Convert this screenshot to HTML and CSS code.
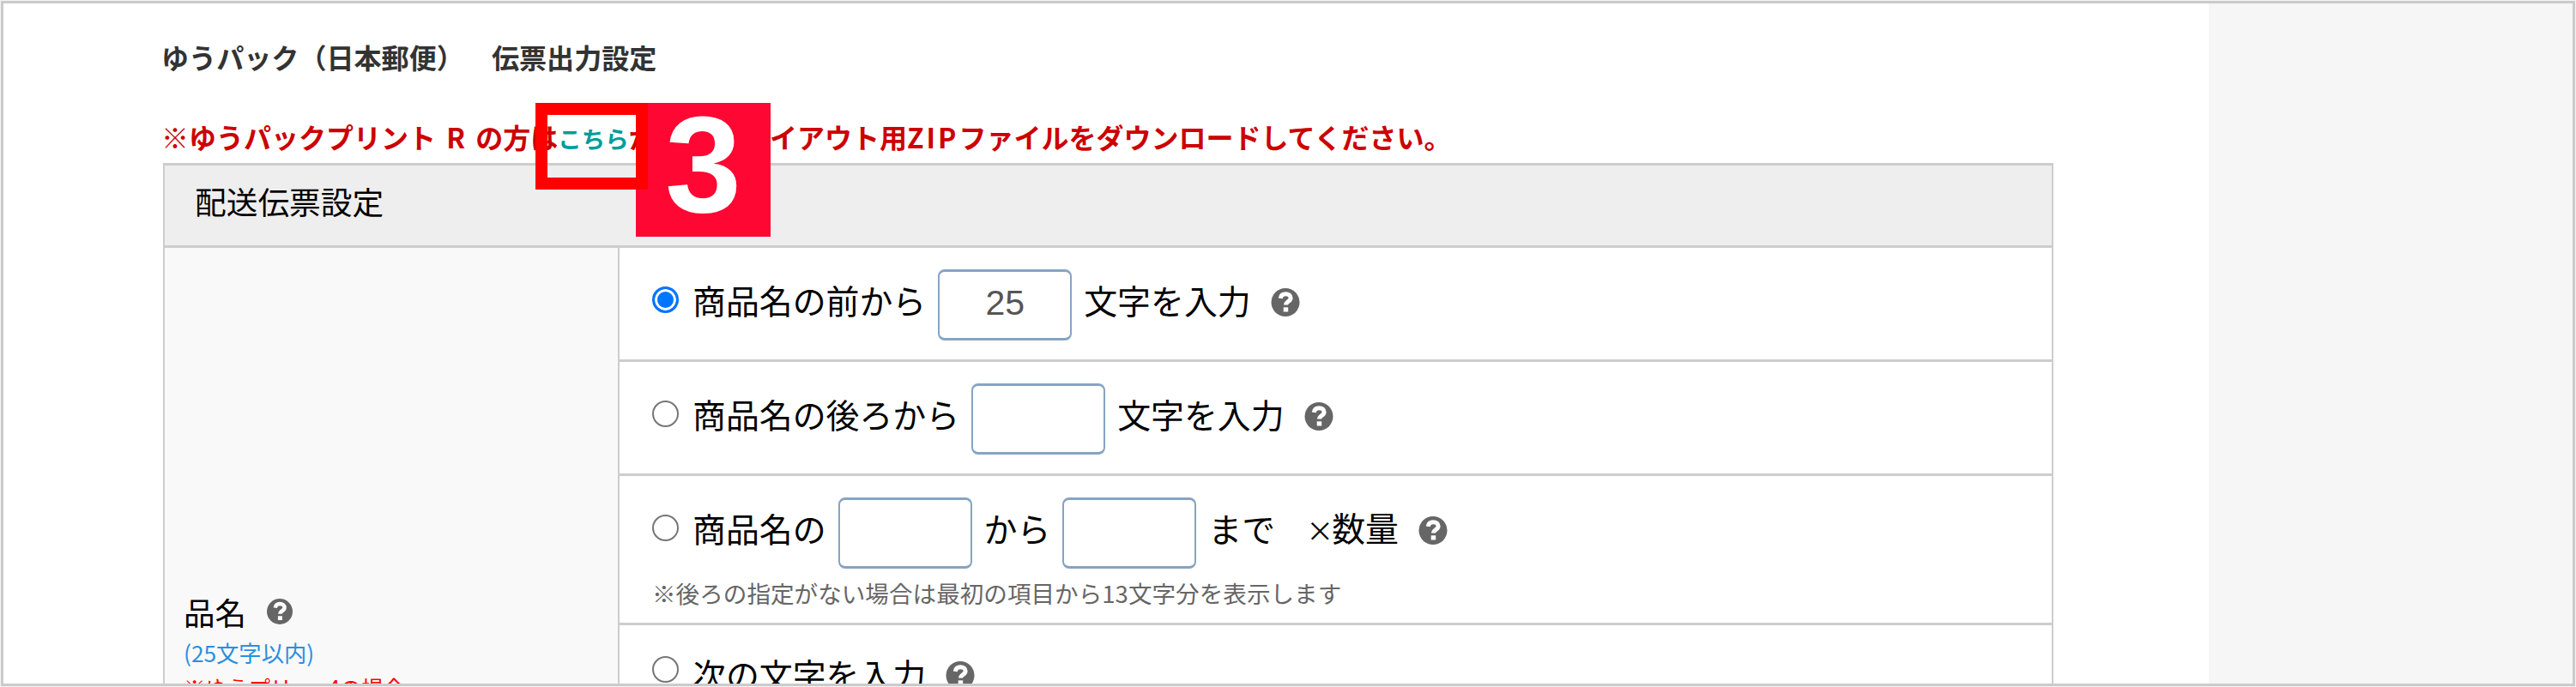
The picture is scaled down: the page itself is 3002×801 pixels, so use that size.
FILE: index.html
```html
<!DOCTYPE html>
<html lang="ja">
<head>
<meta charset="utf-8">
<title>伝票出力設定</title>
<link rel="stylesheet" href="styles.css">
</head>
<body>
<svg width="0" height="0" class="defs"><symbol id="help" viewBox="0 0 33 33"><circle cx="16.500" cy="16.500" r="16.500" fill="#666"/><path d="M10.700 11.800C11.300 8.200 13.500 6.700 16.700 6.700C20.200 6.700 22.600 8.500 22.600 11.500C22.600 15.600 17 15.400 17 19.600" fill="none" stroke="#fff" stroke-width="5"/><rect x="14.200" y="22.300" width="5.500" height="5.200" fill="#fff"/></symbol></svg>
<div class="frame">
  <main class="main">
    <h1 class="title">ゆうパック（日本郵便）　伝票出力設定</h1>
    <p class="warn">※ゆうパックプリント R の方は<a class="link">こちら</a>から<span class="layout">レイアウト用</span><span class="zip">ZIP</span>ファイルをダウンロードしてください。</p>
    <section class="table">
      <h2 class="head">配送伝票設定</h2>
      <div class="body">
        <div class="side">
          <div class="name">品名<svg class="help small"><use href="#help"/></svg></div>
          <div class="limit">(25文字以内)</div>
          <div class="red">※ゆうプリver.4の場合</div>
        </div>
        <div class="rows">
          <div class="row"><div class="line"><i class="radio on"></i><span>商品名の前から</span><span class="input">25</span><span>文字を入力</span><svg class="help"><use href="#help"/></svg></div></div>
          <div class="row"><div class="line"><i class="radio"></i><span>商品名の後ろから</span><span class="input"></span><span>文字を入力</span><svg class="help"><use href="#help"/></svg></div></div>
          <div class="row tall"><div class="line"><i class="radio"></i><span>商品名の</span><span class="input"></span><span>から</span><span class="input"></span><span>まで</span><span class="qty"><span class="times">×</span>数量</span><svg class="help"><use href="#help"/></svg></div><div class="note">※後ろの指定がない場合は最初の項目から13文字分を表示します</div></div>
          <div class="row last"><div class="line"><i class="radio"></i><span>次の文字を入力</span><svg class="help"><use href="#help"/></svg></div></div>
        </div>
      </div>
    </section>
  </main>
  <aside class="aside"></aside>
  <div class="badge">3</div>
  <div class="mark"></div>
</div>
</body>
</html>
```
FILE: styles.css
```css
* { box-sizing: border-box; }
html, body { margin: 0; overflow: hidden; }
body { width: 3002px; height: 801px; padding: 1px; background: #f3f3f3; font-family: "Noto Sans CJK JP", sans-serif; color: #000; white-space: nowrap; text-spacing-trim: space-all; }
.defs { position: absolute; }
.frame { position: relative; display: flex; width: 3000px; height: 799px; border: 3px solid #cbcbcb; background: #fff; overflow: hidden; }
.main { width: 2570px; flex: none; padding: 38px 182px 0 186px; }
.aside { flex: 1; background: #f6f6f6; }
.title { margin: 0 0 0 -2px; height: 48px; line-height: 48px; font-size: 32.100px; font-weight: 700; color: #333; }
.warn { margin: 44px 0 0 -2px; height: 56px; line-height: 51px; font-size: 32px; font-weight: 700; color: #c00; word-spacing: 5px; }
.link { font-size: 27.500px; font-weight: 700; color: #009c9c; }
.layout { margin-left: 68px; }
.zip { letter-spacing: 3px; }
.table { width: 2203px; height: 640px; border: 2px solid #cdcdcd; border-top-width: 3px; }
.head { margin: 0; height: 96px; padding-left: 35px; line-height: 82px; font-size: 36.700px; font-weight: 400; background: #eee; border-bottom: 3px solid #cdcdcd; }
.body { display: flex; height: 541px; }
.side { width: 530px; flex: none; padding: 397px 0 0 22px; background: #f9f9f9; border-right: 2px solid #cdcdcd; }
.name { display: flex; align-items: center; height: 54px; font-size: 36.500px; }
.limit { height: 38px; line-height: 42px; font-size: 26.300px; color: #2a8fe0; }
.red { height: 40px; line-height: 46px; font-size: 25.500px; letter-spacing: -.2px; color: #f00; }
.rows { flex: 1; }
.row { height: 133px; padding: 24px 0 0 38px; border-bottom: 3px solid #cdcdcd; }
.row.tall { height: 174px; }
.row.last { border: 0; padding-top: 12px; }
.line { display: flex; align-items: center; height: 84px; line-height: 60px; font-size: 38.900px; }
.line > span:not(.input) { padding-bottom: 12px; }
.radio { width: 31px; height: 31px; margin: 0 16px 11px 0; border: 2px solid #767676; border-radius: 50%; background: #fff; }
.radio.on { border: 3px solid #0075ff; background: #0075ff; box-shadow: inset 0 0 0 3px #fff; }
.input { width: 156px; height: 83px; margin: 0 14px; border: 3px solid #86a4c3; border-left-width: 2px; border-right-width: 2px; border-radius: 8px; line-height: 73px; text-align: center; font-family: "Liberation Sans", sans-serif; font-size: 41px; color: #555; }
.help { display: block; width: 34px; height: 33px; margin: 0 0 5px 23px; }
.help.small { width: 32px; height: 30px; margin-bottom: 0; }
.qty { margin-left: 36px; }
.times { font-size: 32px; letter-spacing: -2px; }
.row.last .radio { margin-bottom: 6px; }
.row.last .line > span { padding-bottom: 0; margin-top: 3px; }
.row.last .help { margin: 9px 0 0 23px; }
.note { height: 44px; margin-top: 6px; line-height: 44px; font-size: 27.600px; color: #666; }
.badge { position: absolute; left: 737px; top: 116px; width: 157px; height: 156px; background: #ff0733; color: #fff; font-family: "Liberation Sans", sans-serif; font-weight: 700; font-size: 160px; line-height: 144px; text-align: center; }
.mark { position: absolute; left: 620px; top: 116px; width: 131px; height: 101px; border: 14px solid #f00; }
```
